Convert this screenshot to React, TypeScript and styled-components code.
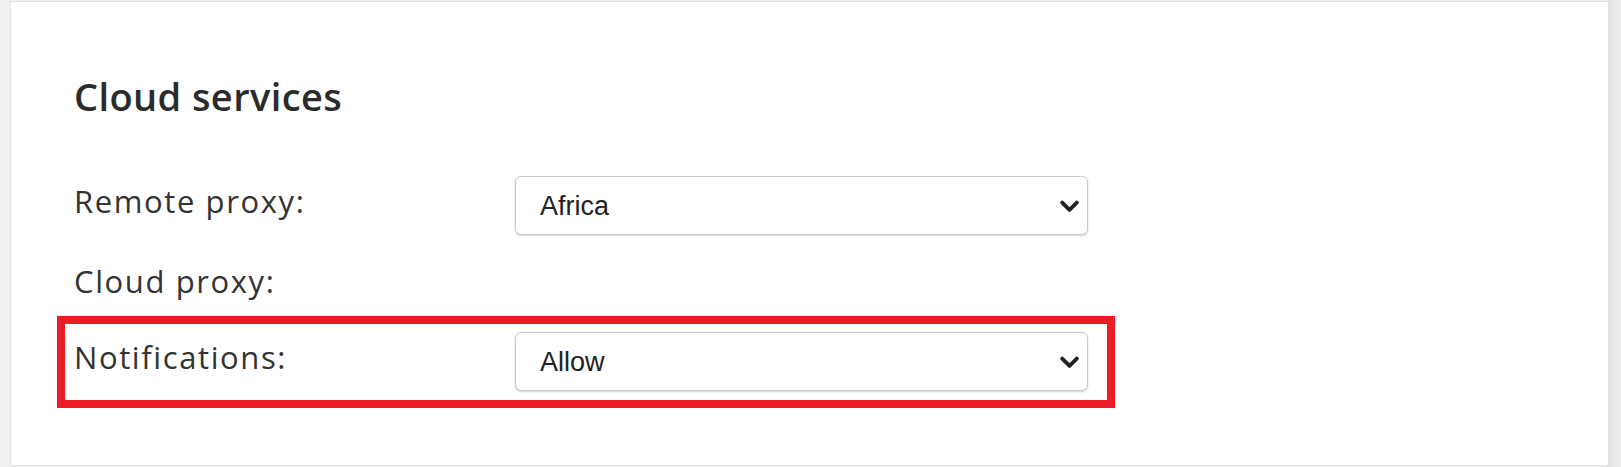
import React from 'react';
import styled, {createGlobalStyle} from 'styled-components';

const GlobalStyle = createGlobalStyle`
  html, body {
    margin: 0;
    padding: 0;
    background: #eff0f2;
  }
  * {
    box-sizing: border-box;
  }
`;

const Page = styled.div`
  padding: 1px 12px 0 10px;
  height: 467px;
  background: linear-gradient(to right, #eff0f2 0, #eff0f2 calc(100% - 14px), #e2e2e4 calc(100% - 14px), #eeeef0 100%);
`;

const Panel = styled.section`
  height: 465px;
  background: #ffffff;
  border: 1px solid #e2e2e2;
  padding: 75px 0 0 63px;
`;

const Title = styled.h2`
  margin: 0 0 61px;
  font-family: 'Open Sans', 'Noto Sans', sans-serif;
  font-weight: 600;
  font-size: 38px;
  line-height: 38px;
  color: #2b2b2b;
  letter-spacing: 0.4px;
`;

const Form = styled.div`
  display: flex;
  flex-direction: column;
  align-items: flex-start;
`;

const Row = styled.div<{$gap?: number}>`
  display: flex;
  align-items: flex-start;
  margin-bottom: ${({$gap}) => $gap ?? 0}px;
`;

const Highlight = styled.div`
  display: flex;
  align-items: flex-start;
  margin-left: -17px;
  padding: 8px 19px 9px 9px;
  border: 8px solid #ed1c24;
`;

const Label = styled.label`
  width: 441px;
  font-family: 'Open Sans', 'Noto Sans', sans-serif;
  font-weight: 400;
  font-size: 31px;
  line-height: 51px;
  color: #333333;
  letter-spacing: 1.6px;
`;

const SelectWrap = styled.div`
  position: relative;
  width: 573px;
  height: 59px;
`;

const Select = styled.select`
  appearance: none;
  -webkit-appearance: none;
  width: 100%;
  height: 100%;
  padding: 0 40px 0 24px;
  font-family: 'Liberation Sans', Arial, sans-serif;
  font-size: 27px;
  color: #222222;
  background: #ffffff;
  border: 1px solid #c9c9c9;
  border-radius: 6px;
  box-shadow: 0 1px 2px rgba(0, 0, 0, 0.18);
  outline: none;
`;

const Chevron = styled.svg`
  position: absolute;
  right: 9px;
  top: 50%;
  width: 19px;
  height: 13px;
  margin-top: -6px;
  pointer-events: none;
`;

const ChevronIcon = () => (
  <Chevron viewBox="0 0 19 13">
    <path d="M2.2 2.6 L9.5 9.9 L16.8 2.6" fill="none" stroke="#222" strokeWidth="3.8" strokeLinecap="round" strokeLinejoin="round" />
  </Chevron>
);

type DropdownProps = {
  value: string;
  options: string[];
};

const Dropdown: React.FC<DropdownProps> = ({value, options}) => (
  <SelectWrap>
    <Select defaultValue={value}>
      {options.map((o) => (
        <option key={o} value={o}>
          {o}
        </option>
      ))}
    </Select>
    <ChevronIcon />
  </SelectWrap>
);

export default function App() {
  return (
    <>
      <GlobalStyle />
      <Page>
        <Panel>
          <Title>Cloud services</Title>
          <Form>
            <Row $gap={21}>
              <Label>Remote proxy:</Label>
              <Dropdown value="Africa" options={['Africa', 'Asia', 'Europe', 'North America', 'South America']} />
            </Row>
            <Row $gap={9}>
              <Label>Cloud proxy:</Label>
            </Row>
            <Highlight>
              <Label>Notifications:</Label>
              <Dropdown value="Allow" options={['Allow', 'Deny']} />
            </Highlight>
          </Form>
        </Panel>
      </Page>
    </>
  );
}
